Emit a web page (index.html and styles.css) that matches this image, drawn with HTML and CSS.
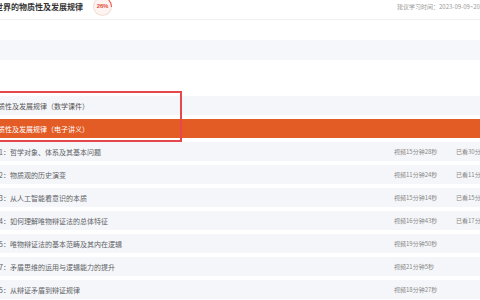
FILE: index.html
```html
<!DOCTYPE html>
<html lang="zh">
<head>
<meta charset="utf-8">
<link rel="stylesheet" href="styles.css">
</head>
<body>
<div class="page">
  <header class="head">
    <div class="title">世界的物质性及发展规律</div>
    <div class="badge"><span class="badge-in">26%</span></div>
    <div class="spacer"></div>
    <div class="date">建议学习时间：2023-09-09~2023-09-30</div>
  </header>
  <div class="band"></div>
  <div class="group">
    <div class="row"><span class="label">质性及发展规律（数学课件）</span></div>
    <div class="row active"><span class="label">质性及发展规律（电子讲义）</span></div>
  </div>
  <div class="list">
    <div class="row"><span class="label">1：哲学对象、体系及其基本问题</span><span class="dur">视频15分钟28秒</span><span class="seen">已看30分钟</span></div>
    <div class="row"><span class="label">2：物质观的历史演变</span><span class="dur">视频11分钟24秒</span><span class="seen">已看11分钟</span></div>
    <div class="row"><span class="label">3：从人工智能看意识的本质</span><span class="dur">视频15分钟14秒</span><span class="seen">已看15分钟</span></div>
    <div class="row"><span class="label">4：如何理解唯物辩证法的总体特征</span><span class="dur">视频16分钟43秒</span><span class="seen">已看17分钟</span></div>
    <div class="row"><span class="label">5：唯物辩证法的基本范畴及其内在逻辑</span><span class="dur">视频19分钟50秒</span><span class="seen"></span></div>
    <div class="row"><span class="label">7：矛盾思维的运用与逻辑能力的提升</span><span class="dur">视频21分钟5秒</span><span class="seen"></span></div>
    <div class="row"><span class="label">5：从辩证矛盾到辩证规律</span><span class="dur">视频18分钟27秒</span><span class="seen"></span></div>
  </div>
</div>
</body>
</html>
```

FILE: styles.css
```css
html, body {
  margin: 0;
  padding: 0;
  background: #ffffff;
  overflow: hidden;
}
.page {
  width: 480px;
  height: 300px;
  overflow: hidden;
  font-family: "Noto Sans CJK SC", "Noto Sans", sans-serif;
  color: #555;
}
.head {
  display: flex;
  align-items: center;
  height: 13px;
  padding-bottom: 6px;
  border-bottom: 1px solid #f0f1f4;
  white-space: nowrap;
}
.title {
  font-size: 8px;
  font-weight: bold;
  color: #333;
  margin-left: -5px;
  line-height: 13px;
}
.badge {
  flex: 0 0 19px;
  width: 19px;
  height: 19px;
  margin-left: 10px;
  margin-top: -1px;
  border-radius: 50%;
  background: conic-gradient(#e8553f 0 26%, #f1ddd7 26% 100%);
  padding: 1px;
  box-sizing: border-box;
  display: flex;
}
.badge-in {
  flex: 1;
  border-radius: 50%;
  background: #fdf3f0;
  color: #e0503c;
  font-size: 6px;
  font-weight: bold;
  display: flex;
  align-items: center;
  justify-content: center;
  font-family: "Liberation Sans", sans-serif;
  letter-spacing: -0.2px;
}
.spacer { flex: 1; }
.date {
  flex: 0 0 83px;
  min-width: 0;
  font-size: 6px;
  color: #999;
  overflow: visible;
}
.band {
  height: 20px;
  margin-top: 20px;
  background: #f6f7fa;
}
.group {
  position: relative;
  margin-top: 36px;
  display: flex;
  flex-direction: column;
  gap: 4px;
}
.group::after {
  content: "";
  position: absolute;
  left: -3px;
  top: -5px;
  border: 2px solid #e6474c;
  box-sizing: border-box;
  width: 185px;
  height: 51px;
  pointer-events: none;
}
.list {
  display: flex;
  flex-direction: column;
  gap: 4px;
  margin-top: 4px;
}
.row {
  display: flex;
  align-items: center;
  height: 19px;
  background: #f5f6f9;
  font-size: 7px;
  color: #606266;
  white-space: nowrap;
}
.row.active {
  background: #e35b25;
  color: #fff;
}
.group .row .label { margin-left: -2px; color: #555; }
.group .row.active .label { color: #fff; }
.label {
  flex: 1;
  min-width: 0;
  margin-left: -1px;
}
.dur {
  flex: 0 0 62px;
  min-width: 0;
  font-size: 6px;
  color: #888;
}
.seen {
  flex: 0 0 24px;
  min-width: 0;
  font-size: 6px;
  color: #888;
  overflow: visible;
}
```
